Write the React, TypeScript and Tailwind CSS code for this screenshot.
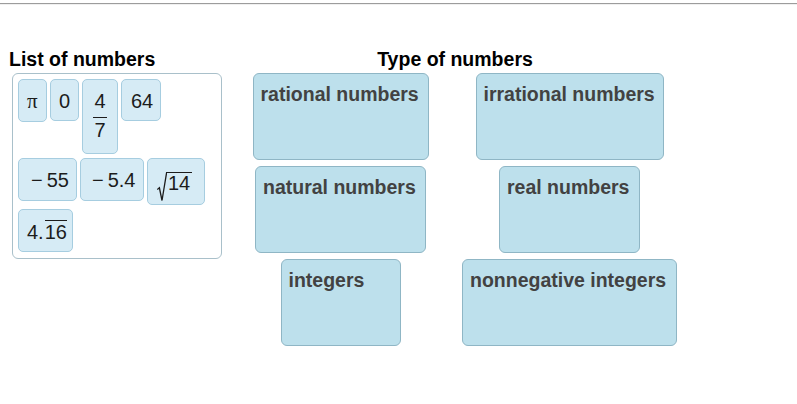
import type { ReactNode } from 'react'

const tile = 'box-border shrink-0 rounded-[5px] border border-[#a6cde0] bg-[#d6ebf5] text-[20px] leading-[22px] text-[#1c1c1c]'

function Tile({ className, children }: { className: string; children: ReactNode }) {
  return <div className={`${tile} ${className}`}>{children}</div>
}

function Minus() {
  return <span>−</span>
}

const box = 'box-border rounded-[6px] border border-[#8fb6c5] bg-[#bde0ec] px-[7px] pt-[9px] h-[87px] text-[19.5px] font-bold leading-[22px] text-[#424242]'

export default function App() {
  return (
    <div className="w-[797px] h-[404px] bg-white font-['Liberation_Sans',Arial,sans-serif] overflow-hidden">
      <div className="mt-[3px] border-t border-[#9c9c9c]" />
      <div className="h-px bg-[#f0f0f0]" />

      <div className="flex mt-[43px]">
        {/* left: source list */}
        <div className="ml-[9px] w-[213px]">
          <h2 className="text-[19.5px] font-bold leading-[22px] text-black">List of numbers</h2>
          <div className="ml-[3px] mt-[3px] w-[210px] h-[186px] box-border rounded-[6px] border border-[#a9c0ca] pl-[5px] pr-[4px] pt-[5px]">
            <div className="flex flex-wrap items-start gap-x-[3px] gap-y-[4px]">
              <Tile className="w-[29px] h-[43px] pl-[8px] pt-[10px]">
                <span className="font-['Liberation_Serif',serif] text-[21px]">π</span>
              </Tile>
              <Tile className="w-[29px] h-[42px] pl-[8px] pt-[10px]">0</Tile>
              <Tile className="w-[36px] h-[75px] pt-[10px] flex flex-col items-center">
                <span>4</span>
                <span className="mt-[5px] w-[14px] h-px bg-[#1c1c1c]" />
                <span className="mt-px">7</span>
              </Tile>
              <Tile className="w-[40px] h-[42px] pl-[9px] pt-[10px]">64</Tile>

              <Tile className="w-[59px] h-[43px] pl-[12px] pt-[10px]">
                <Minus />
                <span className="ml-[4px]">55</span>
              </Tile>
              <Tile className="w-[64px] h-[43px] pl-[11px] pt-[10px]">
                <Minus />
                <span className="ml-[4px]">5.4</span>
              </Tile>
              <Tile className="w-[58px] h-[47px] pl-[9px] pt-[13px] flex items-start">
                <svg width="10" height="30" viewBox="0 0 10 30" className="shrink-0">
                  <polyline
                    points="0.3,17.5 2.4,15.8 5,28.5 9.6,0.6 10,0.6"
                    fill="none"
                    stroke="#1c1c1c"
                    strokeWidth="1.3"
                    strokeLinejoin="miter"
                  />
                </svg>
                <span className="border-t border-[#1c1c1c] pl-[1px] pr-[2px] leading-[21px]">14</span>
              </Tile>

              <Tile className="w-[55px] h-[43px] pl-[8px] pt-[11px]">
                <span>4.</span>
                <span className="ml-[1px] border-t border-[#1c1c1c]">16</span>
              </Tile>
            </div>
          </div>
        </div>

        {/* right: drop targets */}
        <div className="ml-[4px] w-[458px]">
          <h2 className="text-center text-[19.5px] font-bold leading-[22px] text-black">Type of numbers</h2>
          <div className="mt-[3px] grid grid-cols-[229px_229px] justify-items-center gap-y-[6px]">
            <div className={`${box} w-[176px]`}>rational numbers</div>
            <div className={`${box} w-[188px]`}>irrational numbers</div>
            <div className={`${box} w-[171px]`}>natural numbers</div>
            <div className={`${box} w-[141px]`}>real numbers</div>
            <div className={`${box} w-[120px]`}>integers</div>
            <div className={`${box} w-[215px]`}>nonnegative integers</div>
          </div>
        </div>
      </div>
    </div>
  )
}
